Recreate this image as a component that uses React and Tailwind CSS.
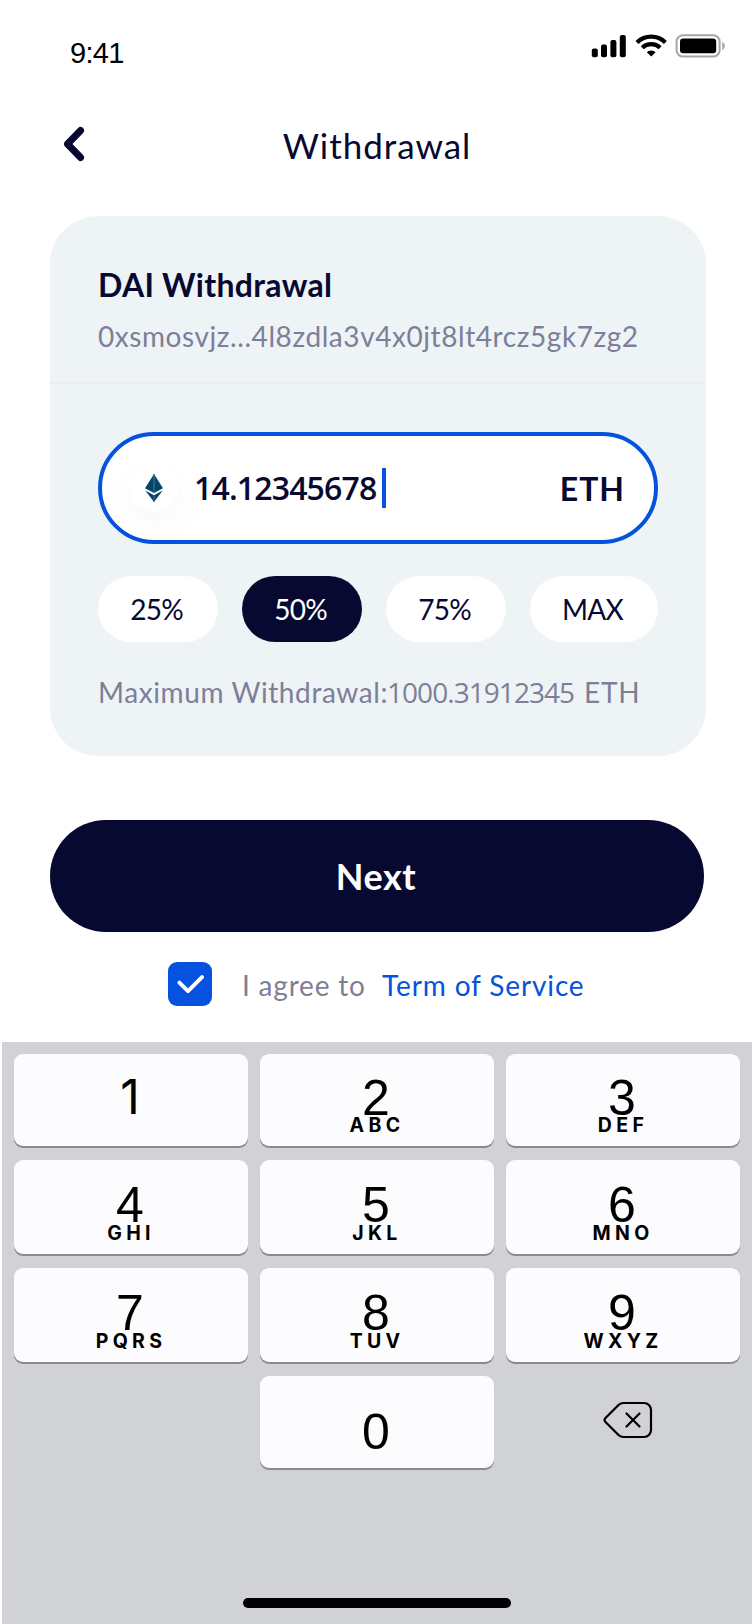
import React from "react";

function StatusBar() {
  return (
    <div className="flex h-28 items-start justify-between pr-[26px] pl-[70px]">
      <p className="mt-[33px] font-['Liberation_Sans',sans-serif] text-[29px] leading-[40px] tracking-[-0.7px] text-black">
        9:41
      </p>
      <div className="mt-[34px] flex h-6 items-start">
        <svg width="36" height="24" viewBox="0 0 36 24" fill="#000">
          <rect x="0.8" y="14.6" width="6" height="8.6" rx="2" />
          <rect x="10" y="10.6" width="6" height="12.6" rx="2" />
          <rect x="19.4" y="6" width="6" height="17.2" rx="2" />
          <rect x="28.8" y="1" width="6" height="22.2" rx="2" />
        </svg>
        <svg className="ml-2" width="32" height="24" viewBox="0 0 32 24" fill="none" stroke="#000">
          <path d="M2 8.4 A20.5 20.5 0 0 1 30.4 8.4" strokeWidth="4.2" />
          <path d="M7.3 13.8 A12.8 12.8 0 0 1 25.1 13.8" strokeWidth="4.2" />
          <path d="M16.2 22.6 L11.8 18.2 A6.3 6.3 0 0 1 20.6 18.2 Z" fill="#000" stroke="none" />
        </svg>
        <svg className="ml-[8px]" width="51" height="24" viewBox="0 0 51 24">
          <rect x="1.6" y="1.2" width="43" height="21.4" rx="6.4" fill="none" stroke="#a6a6a6" strokeWidth="2" />
          <rect x="5" y="4.6" width="36.2" height="14.6" rx="3.2" fill="#000" />
          <path d="M47.2 8 C49.2 9 49.8 10.4 49.8 12 C49.8 13.6 49.2 15 47.2 16 Z" fill="#a6a6a6" />
        </svg>
      </div>
    </div>
  );
}

function Header() {
  return (
    <div className="grid h-16 grid-cols-[200px_1fr_200px] items-center">
      <svg className="ml-[62px]" width="24" height="36" viewBox="0 0 24 36" fill="none" stroke="#070930" strokeWidth="7" strokeLinecap="round" strokeLinejoin="round">
        <path d="M18.6 4.5 L5.5 18 L18.6 31.500" />
      </svg>
      <h1 className="pt-px pl-[2px] text-center text-[35px] leading-[48px] tracking-[0.95px]">Withdrawal</h1>
    </div>
  );
}

function EthIcon() {
  return (
    <div className="flex size-12 items-center justify-center rounded-full bg-white shadow-[0_8px_16px_rgba(0,0,0,0.01),0_16px_40px_8px_rgba(0,0,0,0.018)]">
      <svg width="20" height="30" viewBox="0 0 20 30">
        <path d="M10 1 L1 15.3 L10 20 L19 15.3 Z" fill="#04456b" />
        <path d="M1.3 17.6 L10 29 L18.7 17.6 L10 22.2 Z" fill="#04456b" />
        <path d="M10 1 V20 M10 22.2 V29" stroke="#3a6c8b" strokeWidth="1.3" />
      </svg>
    </div>
  );
}

function Chip({ label, active, wide }) {
  return (
    <button
      className={
        (wide ? "w-32 " : "w-[120px] ") +
        (active ? "bg-[#070930] text-white " : "bg-white text-[#070930] ") +
        "h-[66px] rounded-full pt-px pr-[3px] text-center text-[28px] leading-[65px] tracking-[-0.73px]"
      }
    >
      {label}
    </button>
  );
}

function Card() {
  return (
    <section className="ml-[50px] h-[540px] w-[656px] rounded-[48px] bg-[#eef3f6]">
      <div className="mr-[2px] h-[168px] border-b-2 border-[#e9edf1] pt-[49px] pl-12">
        <h2 className="text-[32px] leading-[40px] font-bold tracking-[0.3px] whitespace-nowrap">DAI Withdrawal</h2>
        <p className="mt-[12px] text-[28px] leading-[38px] tracking-[0.57px] whitespace-nowrap text-[#7d7f98]">
          0xsmosvjz...4l8zdla3v4x0jt8lt4rcz5gk7zg2
        </p>
      </div>
      <div className="px-12 pt-12">
        <div className="flex h-28 items-center rounded-full border-4 border-[#0452de] bg-white pr-[29px] pl-7">
          <EthIcon />
          <span className="ml-4 w-[182px] font-['Open_Sans',sans-serif] text-[32px] leading-[40px] font-semibold tracking-[-0.85px]">
            14.12345678
          </span>
          <span className="ml-[6px] h-10 w-1 bg-[#0452de]" />
          <span className="ml-auto pt-px text-[32px] leading-[40px] font-bold tracking-[1px]">ETH</span>
        </div>
        <div className="mt-8 flex gap-6">
          <Chip label="25%" />
          <Chip label="50%" active />
          <Chip label="75%" />
          <Chip label="MAX" wide />
        </div>
        <p className="mt-[31px] flex text-[28px] leading-[38px] whitespace-nowrap text-[#7d7f98]">
          <span className="w-[289px] tracking-[0.6px]">Maximum Withdrawal:</span>
          <span className="w-[197px] font-['Open_Sans',sans-serif] tracking-[-0.95px]">1000.31912345</span>
          <span className="tracking-[0.8px]">ETH</span>
        </p>
      </div>
    </section>
  );
}

function Terms() {
  return (
    <div className="mt-[30px] flex h-20 items-start pl-[168px] text-[28px] whitespace-nowrap">
      <span className="flex size-11 items-center justify-center rounded-[9px] bg-[#0452de]">
        <svg width="32" height="24" viewBox="0 0 32 24" fill="none" stroke="#fff" strokeWidth="4" strokeLinecap="round" strokeLinejoin="round">
          <path d="M5.4 10.6 L14 19.2 L28 5.200" />
        </svg>
      </span>
      <span className="ml-[30px] w-[140px] leading-[47px] tracking-[0.8px] text-[#7d7f98]">I agree to</span>
      <a className="leading-[47px] tracking-[0.87px] text-[#0452de]">Term of Service</a>
    </div>
  );
}

const rows = [
  [["1", ""], ["2", "ABC"], ["3", "DEF"]],
  [["4", "GHI"], ["5", "JKL"], ["6", "MNO"]],
  [["7", "PQRS"], ["8", "TUV"], ["9", "WXYZ"]],
];

function Key({ digit, letters, first, zero }) {
  return (
    <button
      className={
        "flex w-[234px] flex-col items-center rounded-[9px] bg-[#fcfcfe] pr-[2px] text-black shadow-[0_2px_0_#898a8d] " +
        (zero ? "h-[92px] pt-[31px]" : first ? "h-[92px] pt-[19px]" : "h-[94px] pt-5")
      }
    >
      <span
        className={
          digit === "1"
            ? "font-['Inter',sans-serif] text-[48px] leading-[48px]"
            : "font-['Liberation_Sans',sans-serif] text-[50px] leading-[50px]"
        }
      >
        {digit}
      </span>
      {letters && (
        <span
          className={
            "pl-[2px] font-['Inter',sans-serif] text-[19.5px] leading-[20px] font-bold tracking-[4.3px] " +
            (first ? "-mt-[8px]" : "-mt-[7px]")
          }
        >
          {letters}
        </span>
      )}
    </button>
  );
}

function Keyboard() {
  return (
    <div className="ml-[2px] flex h-[582px] flex-col gap-[14px] bg-[#d1d2d6] pt-3 pl-3">
      {rows.map((row, i) => (
        <div key={i} className="flex gap-3">
          {row.map(([d, l]) => (
            <Key key={d} digit={d} letters={l} first={i === 0} />
          ))}
        </div>
      ))}
      <div className="flex pl-[246px]">
        <Key digit="0" letters="" zero />
        <svg className="mt-[25px] ml-[109px]" width="50" height="38" viewBox="0 0 50 38" fill="none" stroke="#000" strokeWidth="2.2" strokeLinecap="round" strokeLinejoin="round">
          <path d="M20.5 2 H41 A7 7 0 0 1 48 9 V29 A7 7 0 0 1 41 36 H20.5 Q17.5 36 15.5 34 L2.5 21 Q0.6 19 2.5 17 L15.5 4 Q17.5 2 20.5 2 Z" />
          <path d="M23.5 12.5 L36.5 25.5 M36.5 12.5 L23.5 25.5" />
        </svg>
      </div>
      <div className="mt-auto mb-4 ml-[229px] h-[10px] w-[268px] rounded-full bg-black" />
    </div>
  );
}

export default function App() {
  return (
    <main className="h-[1624px] w-[752px] overflow-hidden bg-white font-['Lato',sans-serif] text-[#070930]">
      <StatusBar />
      <Header />
      <div className="h-10" />
      <Card />
      <button className="mt-16 ml-[50px] block h-28 w-[654px] rounded-full bg-[#070930] pr-[2px] text-center text-[36px] leading-[113px] font-bold tracking-[0.5px] text-white">
        Next
      </button>
      <Terms />
      <Keyboard />
    </main>
  );
}
